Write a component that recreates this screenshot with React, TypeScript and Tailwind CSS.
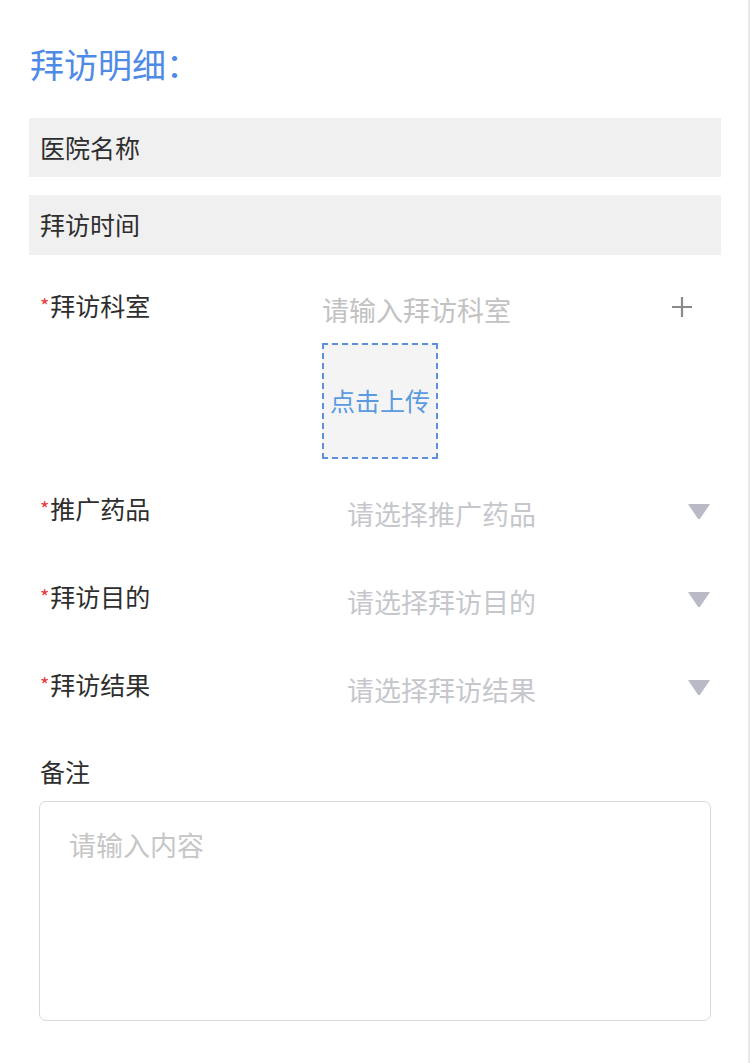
import React from "react";

const font = { fontFamily: '"Noto Sans CJK SC", "Noto Sans", sans-serif' };

function Triangle() {
  return (
    <svg width="24" height="17" viewBox="0 0 24 17" className="block">
      <path d="M1 1 L23 1 L13.2 15.6 Q12 17 10.8 15.6 Z" fill="#b8bac5" />
    </svg>
  );
}

function Plus() {
  return (
    <svg width="22" height="22" viewBox="0 0 22 22" className="block">
      <path d="M11 1 V21 M1 11 H21" stroke="#8a8a8a" strokeWidth="2.2" />
    </svg>
  );
}

function Star() {
  return <span className="text-[#e83a3a] text-[20px] leading-[20px] align-top relative top-[16px] mr-[1px]">*</span>;
}

function SelectRow({ label, placeholder }: { label: string; placeholder: string }) {
  return (
    <div className="flex items-start h-[50px]">
      <div className="w-[282px] leading-[50px] text-[25px] text-[#2e2e2e] flex">
        <Star />
        {label}
      </div>
      <div className="flex-1 flex items-start">
        <div className="pl-[25px] mt-[6px] leading-[50px] text-[27px] text-[#c6c7cc] flex-1">{placeholder}</div>
        <div className="mt-[20px]">
          <Triangle />
        </div>
      </div>
    </div>
  );
}

export default function App() {
  return (
    <div className="w-[750px] min-h-[1063px] bg-white border-r-2 border-[#e8e8e8]" style={font}>
      <div className="pl-[30px] pt-[40px] leading-[48px] text-[34px] text-[#4f8be6]">拜访明细：</div>
      <div className="px-[29px] mt-[30px] w-[750px]">
        <div className="h-[59px] bg-[#f0f0f0] flex items-center pl-[11px] text-[25px] text-[#2e2e2e]">医院名称</div>
        <div className="h-[60px] mt-[18px] bg-[#f0f0f0] flex items-center pl-[11px] text-[25px] text-[#2e2e2e]">拜访时间</div>
      </div>
      <div className="pl-[40px] pr-[37px]">
        <div className="flex items-start h-[50px] mt-[25px]">
          <div className="w-[282px] leading-[50px] text-[25px] text-[#2e2e2e] flex">
            <Star />
            拜访科室
          </div>
          <div className="flex-1 mt-[5px] leading-[50px] text-[27px] text-[#c2c2c2]">请输入拜访科室</div>
          <div className="mt-[16px] mr-[18px]">
            <Plus />
          </div>
        </div>
        <div className="mt-[13px] ml-[282px] w-[116px] h-[116px] border-2 border-dashed border-[#5d8fdb] bg-[#f4f4f4] flex items-center justify-center text-[25px] text-[#5a9ae0]">
          点击上传
        </div>
        <div className="mt-[24px] flex flex-col gap-[38px]">
          <SelectRow label="推广药品" placeholder="请选择推广药品" />
          <SelectRow label="拜访目的" placeholder="请选择拜访目的" />
          <SelectRow label="拜访结果" placeholder="请选择拜访结果" />
        </div>
        <div className="mt-[37px] h-[50px] leading-[50px] text-[25px] text-[#2e2e2e]">备注</div>
        <div className="mt-[5px] ml-[-1px] h-[220px] border border-[#d8d8d8] rounded-[7px] pl-[29px] pt-[30px]">
          <div className="leading-[26px] text-[27px] text-[#c6c6c6]">请输入内容</div>
        </div>
      </div>
    </div>
  );
}
